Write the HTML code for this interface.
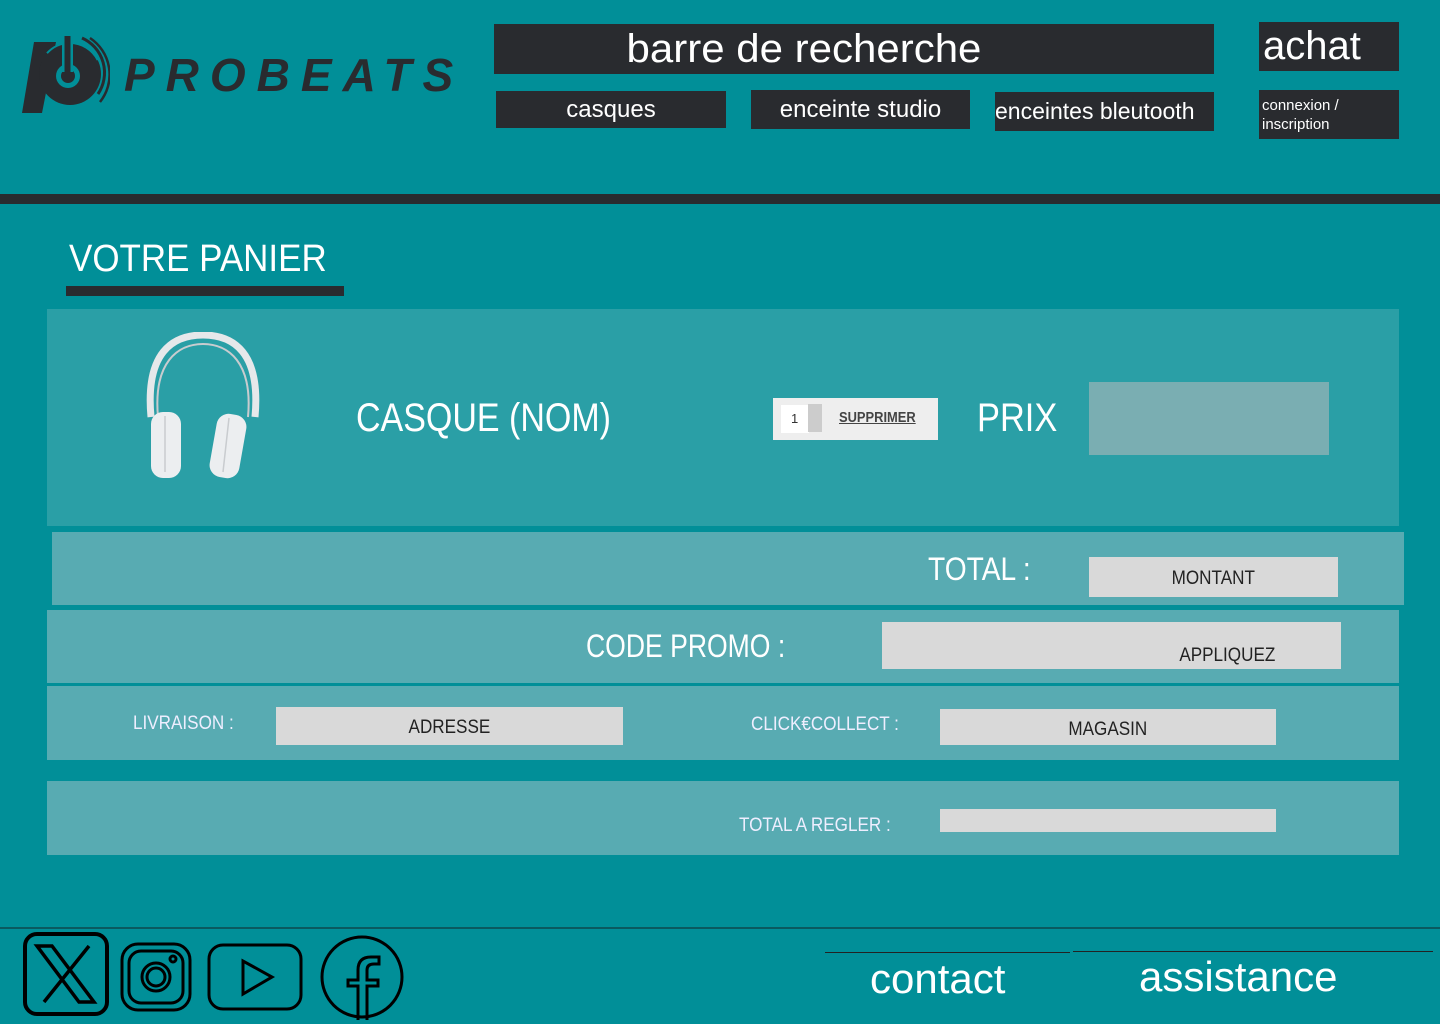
<!DOCTYPE html>
<html><head><meta charset="utf-8"><style>
*{margin:0;padding:0;box-sizing:border-box}
body{width:1440px;height:1024px;background:#018f98;position:relative;overflow:hidden;font-family:"Liberation Sans",sans-serif;color:#fff}
.a{position:absolute}
.dk{background:#292b2f;color:#fff;display:flex;align-items:center;justify-content:center;white-space:nowrap}
.n{transform:scaleX(0.86);transform-origin:left top;white-space:nowrap}
.box{background:#d9d9d9;color:#222;display:flex;align-items:center;justify-content:center}
.box span{display:inline-block;transform:scaleX(0.9)}
</style></head><body>
<svg class="a" style="left:20px;top:32px" width="90" height="84" viewBox="0 0 90 84">
<path d="M14 10 L36 10 L22 81 L2 81 Z" fill="#292b2f"/>
<circle cx="50" cy="42" r="31" fill="#292b2f"/>
<circle cx="50" cy="42" r="31" fill="none" stroke="#018f98" stroke-width="2" stroke-dasharray="60 200" stroke-dashoffset="-120"/>
<circle cx="48" cy="44" r="12" fill="#018f98"/>
<circle cx="48" cy="44" r="7" fill="#292b2f"/>
<rect x="42" y="4" width="11" height="36" fill="#018f98"/>
<rect x="44.5" y="4" width="6" height="38" fill="#292b2f"/>
<path d="M62 6 A38 38 0 0 1 78 62" stroke="#292b2f" stroke-width="3" fill="none"/>
<path d="M70 6 A44 44 0 0 1 80 70" stroke="#292b2f" stroke-width="2.5" fill="none"/>
</svg>
<div class="a" style="left:124px;top:48px;font-size:46px;font-weight:900;font-style:italic;letter-spacing:11px;color:#292b2f">PROBEATS</div>

<div class="dk a" style="left:494px;top:24px;width:720px;height:50px;font-size:40px;padding-right:100px"><span style="display:inline-block;transform:scaleX(1.05)">barre de recherche</span></div>
<div class="dk a" style="left:1259px;top:22px;width:140px;height:49px;font-size:40px;justify-content:flex-start;padding-left:4px">achat</div>
<div class="dk a" style="left:496px;top:91px;width:230px;height:37px;font-size:24px">casques</div>
<div class="dk a" style="left:751px;top:90px;width:219px;height:39px;font-size:24px">enceinte studio</div>
<div class="dk a" style="left:995px;top:92px;width:219px;height:39px;font-size:23px;justify-content:flex-start">enceintes bleutooth</div>
<div class="dk a" style="left:1259px;top:90px;width:140px;height:49px;font-size:15px;display:block;white-space:normal;padding:6px 3px;line-height:19px">connexion / inscription</div>
<div class="a" style="left:0;top:194px;width:1440px;height:10px;background:#292b2f"></div>

<div class="a n" style="left:69px;top:238px;font-size:38px;transform:scaleX(0.92)">VOTRE PANIER</div>
<div class="a" style="left:66px;top:286px;width:278px;height:10px;background:#292b2f"></div>

<div class="a" style="left:47px;top:309px;width:1352px;height:217px;background:#2a9fa6"></div>
<svg class="a" style="left:143px;top:332px" width="120" height="148" viewBox="0 0 120 148">
<path d="M8 85 C2 20 30 3 60 3 C90 3 118 20 112 85" stroke="#e6e8ea" stroke-width="7" fill="none"/>
<path d="M15 85 C10 30 35 12 60 12 C85 12 110 30 105 85" stroke="#c9cccf" stroke-width="2" fill="none"/>
<rect x="8" y="80" width="30" height="66" rx="12" fill="#eceef0"/>
<rect x="70" y="82" width="30" height="64" rx="12" fill="#eceef0" transform="rotate(10 85 114)"/>
<path d="M22 84 L22 140" stroke="#c9cccf" stroke-width="1.5"/>
<path d="M86 86 L80 140" stroke="#c9cccf" stroke-width="1.5"/>
</svg>
<div class="a n" style="left:356px;top:396px;font-size:40px;transform:scaleX(0.85)">CASQUE (NOM)</div>
<div class="a" style="left:773px;top:398px;width:165px;height:42px;background:#eee"></div>
<div class="a" style="left:781px;top:405px;width:28px;height:28px;background:#fff;color:#333;font-size:13px;line-height:28px;padding-left:10px">1</div>
<div class="a" style="left:808px;top:404px;width:14px;height:28px;background:#ccc"></div>
<div class="a n" style="left:839px;top:409px;font-size:15px;color:#444;text-decoration:underline;font-weight:bold">SUPPRIMER</div>
<div class="a n" style="left:977px;top:396px;font-size:40px">PRIX</div>
<div class="a" style="left:1089px;top:382px;width:240px;height:73px;background:#7aaeb2"></div>

<div class="a" style="left:52px;top:532px;width:1352px;height:73px;background:#58abb2"></div>
<div class="a n" style="left:928px;top:551px;font-size:32px;transform:scaleX(0.88)">TOTAL :</div>
<div class="a box" style="left:1089px;top:557px;width:249px;height:40px;font-size:19px;padding-top:4px"><span>MONTANT</span></div>

<div class="a" style="left:47px;top:610px;width:1352px;height:73px;background:#58abb2"></div>
<div class="a n" style="left:586px;top:628px;font-size:32px;transform:scaleX(0.83)">CODE PROMO :</div>
<div class="a box" style="left:882px;top:622px;width:459px;height:47px;font-size:19px;align-items:flex-end;justify-content:flex-end;padding:0 60px 2px 0"><span>APPLIQUEZ</span></div>

<div class="a" style="left:47px;top:686px;width:1352px;height:74px;background:#58abb2"></div>
<div class="a n" style="left:133px;top:713px;font-size:19px;color:#eef;transform:scaleX(0.9)">LIVRAISON :</div>
<div class="a box" style="left:276px;top:707px;width:347px;height:38px;font-size:19px;padding-top:4px"><span>ADRESSE</span></div>
<div class="a n" style="left:751px;top:714px;font-size:19px;color:#eef;transform:scaleX(0.9)">CLICK€COLLECT :</div>
<div class="a box" style="left:940px;top:709px;width:336px;height:36px;font-size:19px;padding-top:6px"><span>MAGASIN</span></div>

<div class="a" style="left:47px;top:781px;width:1352px;height:74px;background:#58abb2"></div>
<div class="a n" style="left:739px;top:815px;font-size:19px;color:#eef;transform:scaleX(0.9)">TOTAL A REGLER :</div>
<div class="a" style="left:940px;top:809px;width:336px;height:23px;background:#d9d9d9"></div>

<div class="a" style="left:0;top:927px;width:1440px;height:2px;background:#0a5a60"></div>
<svg class="a" style="left:22px;top:932px" width="385" height="88" viewBox="0 0 385 88">
<g fill="none" stroke="#000" stroke-width="3">
<rect x="3" y="2" width="82" height="80" rx="12" stroke-width="4"/>
<path d="M15 14 L30 14 L72 70 L57 70 Z M67 14 L22 70" stroke-width="3.5"/>
<rect x="100" y="12" width="68" height="66" rx="16"/>
<rect x="107" y="19" width="54" height="52" rx="12"/>
<circle cx="134" cy="45" r="14"/><circle cx="134" cy="45" r="9"/><circle cx="151" cy="27" r="3"/>
<rect x="187" y="13" width="92" height="64" rx="14"/>
<path d="M221 29 L221 62 L250 45 Z"/>
<circle cx="340" cy="45" r="40"/>
<path d="M345 88 L345 54 L356 54 L356 48 L345 48 L345 38 Q345 32 352 32 L357 32 L357 25 L349 25 Q336 25 336 38 L336 48 L326 48 L326 54 L336 54 L336 88"/>
</g></svg>
<div class="a" style="left:825px;top:952px;width:245px;height:1px;background:#222"></div>
<div class="a" style="left:1073px;top:951px;width:360px;height:1px;background:#222"></div>
<div class="a" style="left:870px;top:955px;font-size:42px">contact</div>
<div class="a" style="left:1139px;top:953px;font-size:42px">assistance</div>
</body></html>
